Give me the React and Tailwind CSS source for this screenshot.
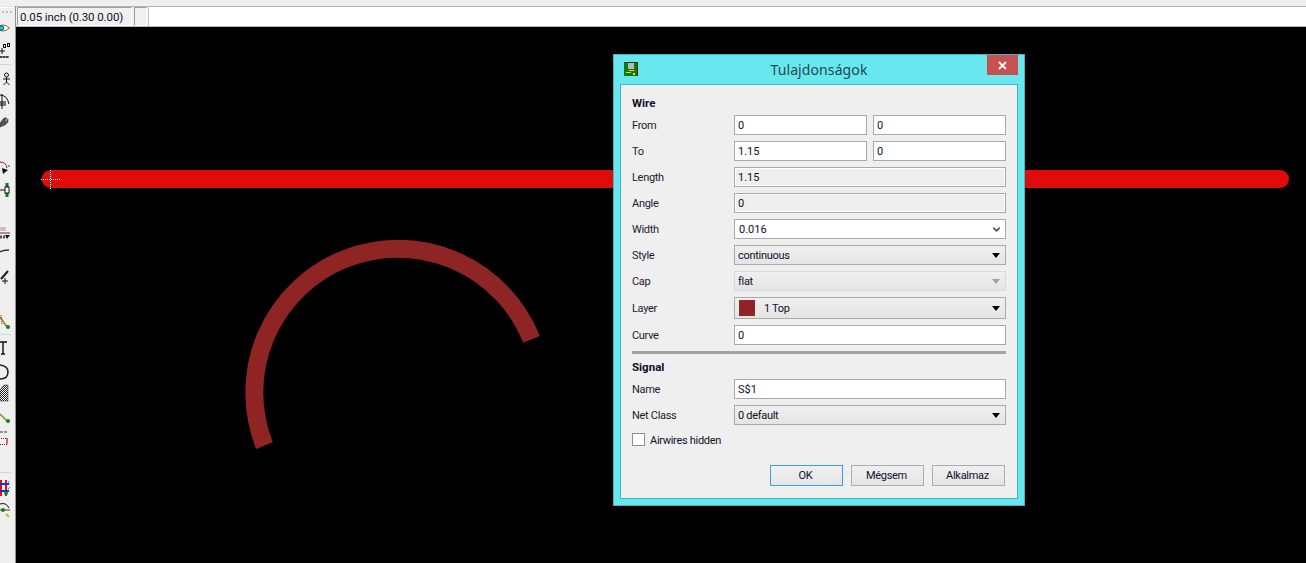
import { ChevronDown } from 'lucide-react';

const labelFont = { fontFamily: 'Roboto, sans-serif' };

function Label({ children }) {
  return <span className="w-[102px] pt-[2px] text-[11px] tracking-[-0.3px] text-[#1a1a2e]">{children}</span>;
}

function TextBox({ value, disabled }) {
  return (
    <div className={`h-5 flex-1 border border-[#a9a9a9] px-[3px] text-[11px] leading-[20px] text-[#10102a] ${disabled ? 'bg-[#efefef] shadow-[inset_-1px_-1px_0_#fff,inset_1px_1px_0_#fff]' : 'bg-white'}`}>
      {value}
    </div>
  );
}

function Select({ children, disabled, tall }) {
  return (
    <div className={`flex flex-1 items-center justify-between border bg-gradient-to-b from-[#f0f0f0] to-[#e4e4e4] pl-[3px] pr-[5px] text-[11px] tracking-[-0.3px] text-[#10102a] ${tall ? 'h-[22px]' : 'h-5'} ${disabled ? 'border-[#d9d9d9]' : 'border-[#a9a9a9]'}`}>
      <div className="flex items-center">{children}</div>
      <span className={`h-0 w-0 border-x-[4px] border-t-[5px] border-x-transparent ${disabled ? 'border-t-[#a0a0a0]' : 'border-t-black'}`} />
    </div>
  );
}

function SelectText({ children }) {
  return <span className="pt-[2px]">{children}</span>;
}

function Row({ label, children, className = 'h-[26px]' }) {
  return (
    <div className={`flex items-center ${className}`}>
      <Label>{label}</Label>
      <div className="flex flex-1 gap-[6px]">{children}</div>
    </div>
  );
}

function DialogButton({ children, active }) {
  return (
    <div className={`flex h-[21px] w-[73px] items-center justify-center border bg-gradient-to-b from-[#f0f0f0] to-[#e5e5e5] pr-[2px] pt-px text-[11px] tracking-[-0.3px] text-[#10102a] ${active ? 'border-[#3c9ee8]' : 'border-[#acacac]'}`}>
      {children}
    </div>
  );
}

function PcbIcon() {
  return (
    <svg width="14" height="14" viewBox="0 0 14 14">
      <rect width="14" height="14" fill="#0a7a14" />
      <rect x="0" y="0" width="14" height="1" fill="#0b3d0e" />
      <rect x="13" y="0" width="1" height="14" fill="#0b3d0e" />
      <rect x="4" y="1" width="6" height="6" fill="#b8b8b8" />
      <rect x="5" y="8" width="6" height="1" fill="#d8e020" />
      <rect x="2" y="10" width="5" height="1" fill="#d8e020" />
      <rect x="10" y="8" width="3" height="2" fill="#e02020" />
      <rect x="9" y="11" width="2" height="2" fill="#e8e020" />
    </svg>
  );
}

// clipped at the left edge like the docked toolbar in the reference
function ToolIcons() {
  return (
    <svg width="15" height="450" viewBox="0 0 15 450" className="absolute left-0 top-[14px]">
      <defs>
        <pattern id="dither" width="2" height="2" patternUnits="userSpaceOnUse">
          <rect width="2" height="2" fill="#fff" />
          <rect width="1" height="1" fill="#222" />
          <rect x="1" y="1" width="1" height="1" fill="#222" />
        </pattern>
      </defs>
      {/* eye */}
      <path d="M-3 7 Q3 1 9.5 7 Q3 13 -3 7Z" fill="#fff" stroke="#7c7c10" strokeWidth="1" />
      <circle cx="1.5" cy="7" r="2.2" fill="#00d8f0" stroke="#003" strokeWidth="0.7" />
      {/* grid marks */}
      <path d="M0 30H5M2 27V33M1 35V37M4 35V37M7 35V37M0 36H9" stroke="#111" strokeWidth="1" fill="none" />
      <rect x="3.5" y="23.5" width="2" height="3" fill="none" stroke="#111" />
      <rect x="7.5" y="22.5" width="2" height="3" fill="none" stroke="#111" />
      <path d="M0 43.5H11" stroke="#d4d4d4" />
      {/* stick figure */}
      <circle cx="6.5" cy="54" r="2" fill="none" stroke="#111" />
      <path d="M6.5 56V61M3 58H10M6.5 61L3.5 64M6.5 61L9.5 64" stroke="#111" fill="none" />
      {/* rotate */}
      <path d="M0 74Q7 74 9 83" stroke="#111" fill="none" />
      <rect x="0" y="80" width="6" height="5" fill="#777" />
      <path d="M2 73V88" stroke="#111" />
      {/* wrench */}
      <path d="M0 102L4 97L7 97L5 100L6 101L8 98L8 101L5 104L0 106Z" fill="#555" stroke="#222" strokeWidth="0.5" />
      {/* miter */}
      <path d="M0 141Q6 141 7 147" stroke="#8a1c1c" fill="none" />
      <path d="M2 147L8 149L3 153Z" fill="#111" />
      <path d="M8 145H10" stroke="#8a1c1c" />
      {/* split */}
      <path d="M7 162V176" stroke="#0a7a14" strokeWidth="3" />
      <rect x="5" y="166" width="4" height="6" fill="#fff" stroke="#111" />
      <path d="M0 169H5" stroke="#111" />
      {/* text + layers */}
      <path d="M0 207H6M0 209H6" stroke="#999" />
      <path d="M0 212H10" stroke="#8a1c1c" />
      <path d="M0 216H6" stroke="#555" strokeWidth="3" strokeDasharray="2 1" />
      <path d="M5 214L10 214L7 218Z" fill="#111" />
      {/* arc */}
      <path d="M0 231Q3 229 9 229" stroke="#333" strokeWidth="1.5" fill="none" />
      {/* line plus */}
      <path d="M1 258L8 250" stroke="#222" strokeWidth="2" />
      <path d="M2 260H8M5 257V263" stroke="#111" />
      {/* route */}
      <path d="M0 296L7 306" stroke="#8a8a10" strokeWidth="1.5" />
      <path d="M1 294L2 304" stroke="#c02020" strokeDasharray="1 1" />
      <circle cx="8" cy="306" r="2" fill="#0a8a1e" />
      <path d="M0 313.5H11" stroke="#d4d4d4" />
      {/* T tool */}
      <path d="M-1 321H7M3 321V333M1 333H5" stroke="#111" strokeWidth="1.4" fill="none" />
      {/* circle */}
      <path d="M0 344Q8 345 8 351Q8 358 0 358" stroke="#222" strokeWidth="1.6" fill="none" />
      {/* polygon */}
      <path d="M0 369L4 364H8V380H0Z" fill="url(#dither)" stroke="#222" strokeWidth="0.5" />
      {/* airwire */}
      <path d="M0 393L7 400" stroke="#8a8a10" strokeWidth="1.5" />
      <circle cx="8" cy="400" r="2" fill="#0a8a1e" />
      {/* dotted box */}
      <rect x="-1" y="417.5" width="8" height="6" fill="none" stroke="#8a1c1c" strokeDasharray="1 1" />
      <path d="M7 417V423" stroke="#c02020" />
      <path d="M0 411H8" stroke="#333" strokeDasharray="3 1" />
    </svg>
  );
}

function BottomIcons() {
  return (
    <svg width="15" height="40" viewBox="0 0 15 40" className="absolute left-0 top-[472px]">
      <path d="M1 1V17M6 1V17" stroke="#e01010" strokeWidth="2" />
      <path d="M0 5H9M0 12H9" stroke="#1030e0" strokeWidth="2" />
      <path d="M8 2L10 5M8 10L10 8" stroke="#1030e0" strokeDasharray="1 1" />
      <circle cx="6" cy="14" r="2" fill="#0a8a1e" />
      <path d="M0 25Q6 23 9 29" stroke="#111" fill="none" />
      <path d="M0 31H10" stroke="#8a1c1c" />
      <circle cx="3" cy="31" r="2" fill="#0a8a1e" />
      <path d="M6 35L9 38" stroke="#c8b820" strokeWidth="2" />
    </svg>
  );
}

export default function App() {
  return (
    <div className="flex h-[563px] w-[1306px] flex-col overflow-hidden bg-[#f0f0f0]" style={labelFont}>
      <div className="h-[6px] shrink-0 bg-[#efefef]" />
      <div className="relative flex flex-1">
        <aside className="relative w-[15px] shrink-0 border-t border-t-[#e4e4e4] bg-[#efefef]">
          <div className="h-px bg-white" />
          <div className="ml-[2px] mt-[3px] h-[2px] w-[10px] border-t-2 border-dotted border-t-[#c0c0c0]" />
          <ToolIcons />
          <div className="absolute left-0 top-[465px] h-px w-[11px] bg-[#d4d4d4]" />
          <BottomIcons />
        </aside>
        <main className="flex flex-1 flex-col border-l border-l-[#8f8f8f]">
          <div className="flex h-[21px] shrink-0 border-y border-t-[#b5b5b5] border-b-[#b8b8b8] bg-[#f0f0f0]">
            <div className="ml-px w-[115px] border border-[#a0a0a0] border-b-white border-r-white pl-[2px] text-[11.5px] leading-[18px] tracking-[-0.1px] text-[#10102a]">
              0.05 inch (0.30 0.00)
            </div>
            <div className="ml-[2px] w-[13px] border border-[#a0a0a0] border-b-white border-r-white" />
            <div className="ml-px flex-1 border-l border-l-[#c8c8c8] bg-white" />
          </div>
          <div className="relative flex-1 bg-black">
            {/* board canvas: page coordinates minus the canvas origin (16, 27) */}
            <svg width="1290" height="536" viewBox="16 27 1290 536" className="absolute inset-0">
              <line x1="50.7" y1="179" x2="1280" y2="179" stroke="#e00b0b" strokeWidth="18" strokeLinecap="round" />
              <path d="M264.5 445.7 A143 143 0 1 1 531.5 339.3" fill="none" stroke="#8f2424" strokeWidth="18" />
              <path d="M41 179.5H61M50.5 170V189" stroke="#fff" strokeWidth="1" strokeDasharray="1 1" />
            </svg>
          </div>
        </main>

        <section className="absolute left-[613px] top-[48px] flex h-[452px] w-[412px] flex-col border border-[#3fb6c0] bg-[#69e7ee]">
          <header className="relative flex h-[29px] shrink-0 items-center justify-center">
            <div className="absolute left-[10px] top-[7px]"><PcbIcon /></div>
            <span className="text-[14px] tracking-[0.1px] text-[#1d4a50]" style={{ fontFamily: '"Noto Sans", sans-serif' }}>Tulajdonságok</span>
            <div className="absolute right-[6px] top-0 flex h-5 w-[31px] items-center justify-center bg-[#c75050]">
              <svg width="9" height="9" viewBox="0 0 9 9"><path d="M1 1L8 8M8 1L1 8" stroke="#fff" strokeWidth="1.8" /></svg>
            </div>
          </header>
          <div className="mx-[6px] mb-[6px] flex-1 border border-[#3fb6c0] bg-[#efefef] px-[11px] pt-[9px]">
            <div className="h-[18px] text-[11.5px] font-bold leading-[18px] text-[#10102a]">Wire</div>
            <Row label="From"><TextBox value="0" /><TextBox value="0" /></Row>
            <Row label="To"><TextBox value="1.15" /><TextBox value="0" /></Row>
            <Row label="Length"><TextBox value="1.15" disabled /></Row>
            <Row label="Angle"><TextBox value="0" disabled /></Row>
            <Row label="Width">
              <div className="flex h-5 flex-1 items-center justify-between border border-[#a9a9a9] bg-white pl-[4px] pr-[3px] text-[11px] text-[#10102a]">
                <span className="pt-[3px]">0.016</span>
                <ChevronDown size={11} strokeWidth={3.5} className="text-[#555]" />
              </div>
            </Row>
            <Row label="Style"><Select><SelectText>continuous</SelectText></Select></Row>
            <Row label="Cap"><Select disabled><SelectText>flat</SelectText></Select></Row>
            <Row label="Layer" className="h-[28px]">
              <Select tall>
                <span className="ml-[1px] mr-[9px] h-4 w-4 bg-[#8f2424]" />
                <SelectText>1 Top</SelectText>
              </Select>
            </Row>
            <Row label="Curve"><TextBox value="0" /></Row>
            <div className="mt-[3px] h-[3px] w-full bg-[#a3a3a3]" />
            <div className="mt-[5px] h-[17px] text-[11.5px] font-bold leading-[17px] text-[#10102a]">Signal</div>
            <Row label="Name"><TextBox value="S$1" /></Row>
            <Row label="Net Class"><Select><SelectText>0 default</SelectText></Select></Row>
            <div className="mt-[5px] flex h-[13px] items-center gap-[5px]">
              <span className="h-[13px] w-[13px] border border-[#8f8f8f] bg-white" />
              <span className="pt-px text-[11px] leading-[13px] tracking-[-0.3px] text-[#10102a]">Airwires hidden</span>
            </div>
            <div className="mt-[19px] flex justify-end gap-[8px] pr-[1px]">
              <DialogButton active>OK</DialogButton>
              <DialogButton>Mégsem</DialogButton>
              <DialogButton>Alkalmaz</DialogButton>
            </div>
          </div>
        </section>
      </div>
    </div>
  );
}
